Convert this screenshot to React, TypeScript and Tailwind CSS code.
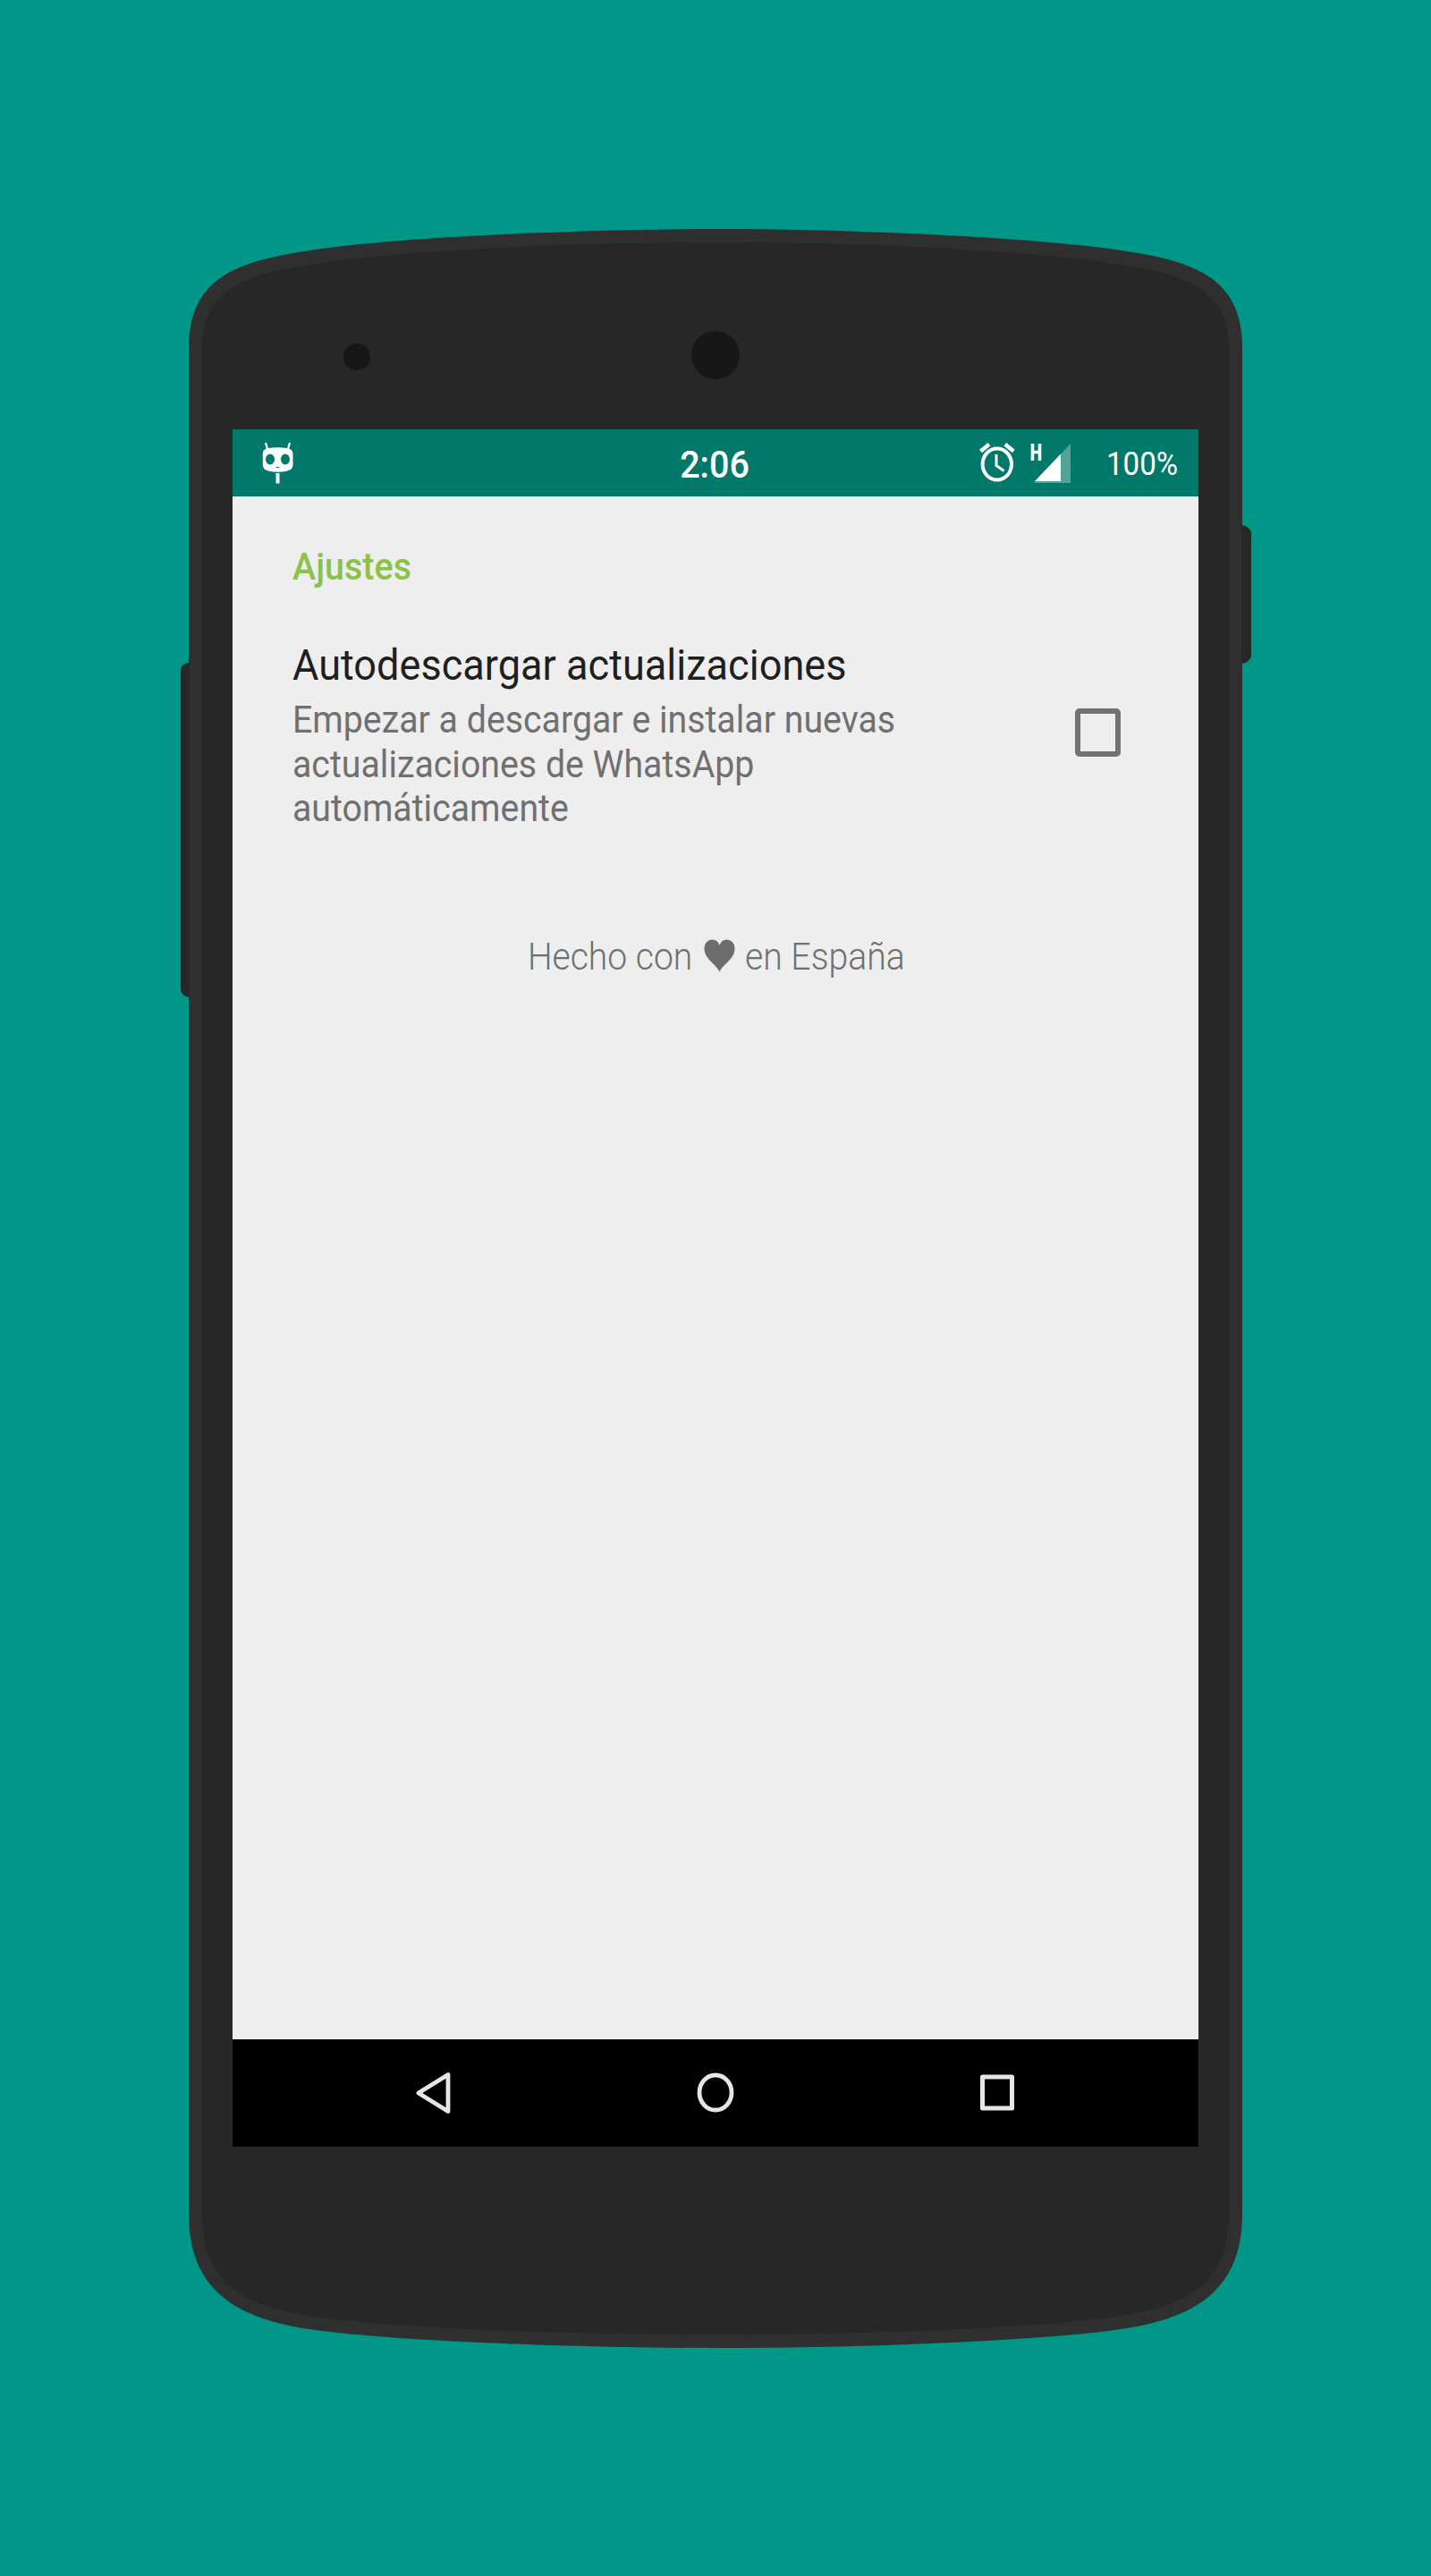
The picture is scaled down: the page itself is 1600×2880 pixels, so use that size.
import React from "react";

function PhoneBody() {
  return (
    <svg className="absolute -left-[11px] top-0" width="1200" height="2369" viewBox="200 256 1200 2369" aria-hidden="true">
      <path
        d="M211 390C211 309 265 291.800 353 279C443 266 640 256 800 256C960 256 1157 266 1247 279C1335 291.800 1389 309 1389 390V2475C1389 2567 1327 2594 1247 2605C1167 2616 980 2625 800 2625C620 2625 433 2616 353 2605C273 2594 211 2567 211 2475Z"
        fill="#2f2f2f"
      />
      <path
        d="M226 390C226 313 293 305 353 295C430 283 600 271 800 271C1000 271 1170 283 1247 295C1307 305 1374 313 1374 390V2475C1374 2564 1312 2580 1247 2590C1170 2602 980 2610 800 2610C620 2610 430 2602 353 2590C288 2580 226 2564 226 2475Z"
        fill="#272727"
      />
      <path d="M211.500 741Q202 742.500 202 749V1106Q202 1113 211.500 1115Z" fill="#272727" />
      <path d="M1388.500 587Q1396 588 1399 595V734Q1396 741 1388.500 742Z" fill="#272727" />
      <circle cx="399" cy="399" r="15" fill="#171717" />
      <circle cx="800" cy="397" r="27" fill="#171717" />
    </svg>
  );
}

function RobotIcon() {
  return (
    <svg width="36" height="48" viewBox="0 0 36 48" aria-hidden="true">
      <path d="M4 1L6 8M31 1L29 8" stroke="#fff" strokeWidth="2.2" />
      <path
        fillRule="evenodd"
        fill="#fff"
        d="M7 7Q17.500 5.500 28 7Q34 8 34.500 13V26Q34.500 31 28 32.500Q17.500 35 7 32.500Q1 31 .8 26V13Q1 8 7 7ZM9 13.500A5 6 0 1 0 9 25.500A5 6 0 1 0 9 13.500ZM26 13.500A5 6 0 1 0 26 25.500A5 6 0 1 0 26 13.500ZM15.500 28H19.500V29H15.500Z"
      />
      <path d="M17.500 35V46.500" stroke="#fff" strokeWidth="4" />
    </svg>
  );
}

function AlarmIcon() {
  return (
    <svg width="40" height="44" viewBox="0 0 40 44" fill="none" stroke="#fff" aria-hidden="true">
      <ellipse cx="19.800" cy="24" rx="16.200" ry="17.500" strokeWidth="4" />
      <path d="M1.500 9.500L11 1.700M38.300 9.500L28.800 1.700" strokeWidth="4.500" />
      <path d="M19 13V25.500L27.500 31.500" strokeWidth="3" />
    </svg>
  );
}

function SignalIcon() {
  return (
    <svg width="46" height="45" viewBox="0 0 46 45" aria-hidden="true">
      <path d="M2.500 1V20M10.500 1V20M2.500 10.500H10.500" stroke="#fff" strokeWidth="3.600" />
      <path d="M45 1V45H4Z" fill="#fff" fillOpacity=".32" />
      <path d="M34 12.500V43H5Z" fill="#fff" />
    </svg>
  );
}

function StatusBar() {
  return (
    <header className="grid h-[75px] grid-cols-3 items-start bg-[#00796b] text-white">
      <div className="pt-[14px] pl-[33px]">
        <RobotIcon />
      </div>
      <div className="mr-[2px] scale-x-[.94] pt-[15px] text-center text-[42px] leading-[49px] font-medium">2:06</div>
      <div className="flex justify-end pr-[23px]">
        <div className="pt-[15px]">
          <AlarmIcon />
        </div>
        <div className="ml-[17px] pt-[15px]">
          <SignalIcon />
        </div>
        <div className="ml-[32px] origin-right scale-x-[.92] pt-[18px] text-[36px] leading-[42px]">100%</div>
      </div>
    </header>
  );
}

function Settings() {
  return (
    <main className="flex flex-1 flex-col bg-[#eeeeee] pt-[54px]">
      <h1 className="ml-[67px] origin-left scale-x-[.94] text-[42px] leading-[49px] font-medium text-[#8bc34a]">Ajustes</h1>
      <section className="mt-[58px] flex items-start justify-between pr-[87px] pl-[67px]">
        <div className="w-[800px]">
          <h2 className="origin-left scale-x-[.9395] text-[48px] leading-[56px] whitespace-nowrap text-[#1f1f1f]">
            Autodescargar actualizaciones
          </h2>
          <p className="mt-[8px] origin-left scale-x-[.9355] text-[42px] leading-[49.5px] text-[#707070]">
            Empezar a descargar e instalar nuevas
            <br />
            actualizaciones de WhatsApp
            <br />
            automáticamente
          </p>
        </div>
        <div role="checkbox" aria-checked="false" className="mt-[76px] h-[54px] w-[51px] rounded-[5px] border-6 border-[#727272]" />
      </section>
      <p className="mt-[116px] flex justify-center text-[42px] leading-[49px] font-light text-[#707070]">
        <span className="origin-right scale-x-[.93]">Hecho con</span>
        <svg className="mr-[11px] ml-[13px] mt-[5px]" width="35" height="37" viewBox="0 0 35 36" preserveAspectRatio="none" aria-hidden="true">
          <path
            fill="#6d6d6d"
            d="M17.500 35.500C14 27.500 .5 21.500 .5 10.500C.5 4.500 4.500 .5 9.500 .5C13 .5 16 2.500 17.500 6.500C19 2.500 22 .5 25.500 .5C30.500 .5 34.500 4.500 34.500 10.500C34.500 21.500 21 27.500 17.500 35.500Z"
          />
        </svg>
        <span className="origin-left scale-x-[.933]">en España</span>
      </p>
    </main>
  );
}

function NavBar() {
  return (
    <nav className="flex h-[120px] items-center justify-between bg-black px-[204px]">
      <svg width="42" height="50" viewBox="0 0 42 50" fill="none" stroke="#e6e6e6" strokeWidth="4.800" strokeLinejoin="round" aria-hidden="true">
        <path d="M37 4.500V45.500L3.800 25Z" />
      </svg>
      <svg width="44" height="46" viewBox="0 0 44 46" fill="none" stroke="#e6e6e6" strokeWidth="4.800" aria-hidden="true">
        <ellipse cx="22" cy="22.500" rx="18" ry="19.500" />
      </svg>
      <svg width="42" height="44" viewBox="0 0 42 44" fill="none" stroke="#e6e6e6" strokeWidth="5" strokeLinejoin="round" aria-hidden="true">
        <rect x="4.500" y="4" width="33" height="35" />
      </svg>
    </nav>
  );
}

export default function App() {
  return (
    <div className="flex h-[2880px] w-[1600px] justify-center bg-[#009688] pt-[256px] font-['Roboto',sans-serif]">
      <div className="relative h-[2369px] w-[1178px] px-[49px] pt-[224px]">
        <PhoneBody />
        <div className="relative flex h-[1920px] w-[1080px] flex-col">
          <StatusBar />
          <Settings />
          <NavBar />
        </div>
      </div>
    </div>
  );
}
